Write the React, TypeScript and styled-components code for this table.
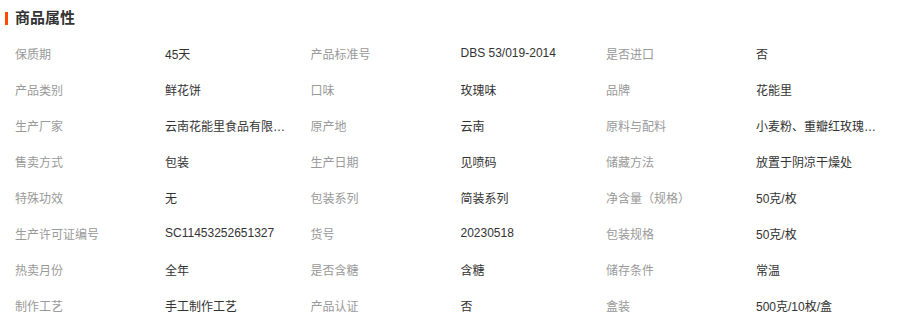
import React from "react";
import styled, { createGlobalStyle } from "styled-components";

const GlobalStyle = createGlobalStyle`
  body {
    margin: 0;
    background: #fff;
    font-family: "Liberation Sans", "Noto Sans CJK SC", sans-serif;
  }
`;

const attrs: [string, string][] = [
  ["保质期", "45天"],
  ["产品标准号", "DBS 53/019-2014"],
  ["是否进口", "否"],
  ["产品类别", "鲜花饼"],
  ["口味", "玫瑰味"],
  ["品牌", "花能里"],
  ["生产厂家", "云南花能里食品有限公司"],
  ["原产地", "云南"],
  ["原料与配料", "小麦粉、重瓣红玫瑰、白砂糖"],
  ["售卖方式", "包装"],
  ["生产日期", "见喷码"],
  ["储藏方法", "放置于阴凉干燥处"],
  ["特殊功效", "无"],
  ["包装系列", "简装系列"],
  ["净含量（规格）", "50克/枚"],
  ["生产许可证编号", "SC11453252651327"],
  ["货号", "20230518"],
  ["包装规格", "50克/枚"],
  ["热卖月份", "全年"],
  ["是否含糖", "含糖"],
  ["储存条件", "常温"],
  ["制作工艺", "手工制作工艺"],
  ["产品认证", "否"],
  ["盒装", "500克/10枚/盒"],
];

export default function App() {
  return (
    <>
      <GlobalStyle />
      <Panel>
        <Title>商品属性</Title>
        <AttrList>
          {attrs.map(([label, value]) => (
            <AttrItem key={label}>
              <Label>{label}</Label>
              <Value title={value}>{value}</Value>
            </AttrItem>
          ))}
        </AttrList>
      </Panel>
    </>
  );
}

const Panel = styled.div`
  width: 921px;
`;

const Title = styled.h3`
  position: relative;
  margin: 0;
  height: 35px;
  line-height: 36px;
  padding-left: 15px;
  font-size: 15px;
  font-weight: bold;
  color: #333;

  &::before {
    content: "";
    position: absolute;
    left: 5px;
    top: 12px;
    width: 3px;
    height: 13px;
    background: #ff4a00;
  }
`;

const AttrList = styled.ul`
  display: grid;
  grid-template-columns: repeat(3, 295.5px);
  list-style: none;
  margin: 0;
  padding: 0 0 0 15px;
`;

const AttrItem = styled.li`
  display: flex;
  align-items: center;
  height: 36px;
  font-size: 12px;
`;

const Label = styled.span`
  width: 150px;
  flex-shrink: 0;
  color: #999;
  white-space: nowrap;
`;

const Value = styled.span`
  max-width: 124px;
  color: #333;
  white-space: nowrap;
  overflow: hidden;
  text-overflow: ellipsis;
`;
